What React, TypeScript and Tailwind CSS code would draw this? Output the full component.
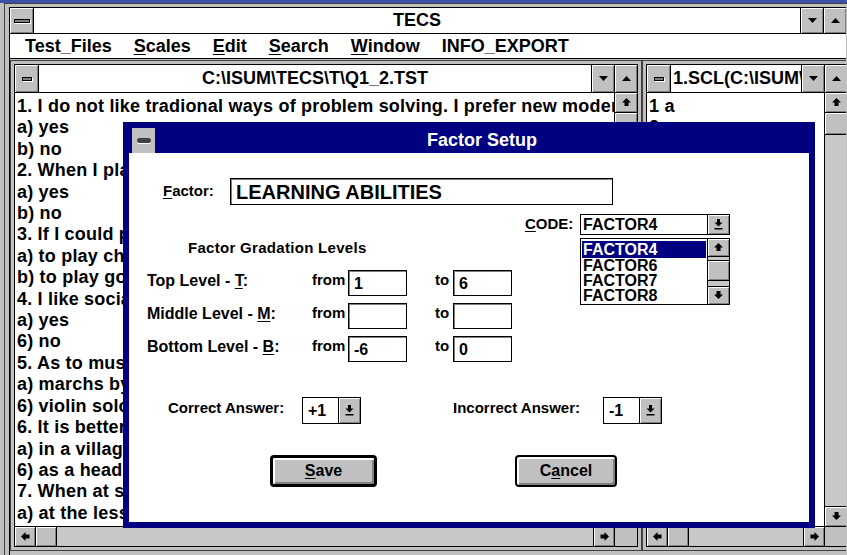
import React from "react";

type Dir = "up" | "down" | "left" | "right";

const bevel = "bg-[#c0c0c0] shadow-[inset_1px_1px_0_#fff,inset_-1px_-1px_0_#808080]";

const arrowPaths: Record<Dir, string> = {
  up: "M4.5 0L9 4.5H6.5V8h-4V4.5H0z",
  down: "M4.5 8L9 3.5H6.5V0h-4v3.5H0z",
  left: "M0 4.5L4.5 0v2.5H8.5v4H4.5V9z",
  right: "M9 4.5L4.5 0v2.5H0.5v4h4V9z",
};

const ScrollArrow = ({ dir }: { dir: Dir }) => (
  <svg width="9" height="9" viewBox="0 0 9 9">
    <path d={arrowPaths[dir]} fill="#000" />
  </svg>
);

const Tri = ({ up }: { up?: boolean }) => (
  <svg width="9" height="5" viewBox="0 0 9 5">
    <path d={up ? "M0 5h9L4.5 0z" : "M0 0h9L4.5 5z"} fill="#000" />
  </svg>
);

// combo box button: down arrow sitting on a bar
const ComboArrow = () => (
  <svg width="9" height="11" viewBox="0 0 9 11">
    <path d="M3 0h3v3.5h2.5L4.5 7.5 0.5 3.5H3z M0.5 9h8v1.5h-8z" fill="#000" />
  </svg>
);

const SysBox = ({ wide }: { wide?: boolean }) => (
  <div className={`flex w-[24px] shrink-0 items-center justify-center border-r border-black ${bevel}`}>
    <div
      className={
        wide
          ? "h-[4px] w-[16px] border border-black bg-[#808080] shadow-[1px_1px_0_#fff]"
          : "h-[4px] w-[10px] border border-black bg-[#808080] shadow-[1px_1px_0_#fff]"
      }
    />
  </div>
);

const TitleButtons = () => (
  <>
    <div className={`flex w-[23px] shrink-0 items-center justify-center border-l border-black ${bevel}`}>
      <Tri />
    </div>
    <div className={`flex w-[23px] shrink-0 items-center justify-center border-l border-black ${bevel}`}>
      <Tri up />
    </div>
  </>
);

const VScroll = ({ thumb }: { thumb: string }) => (
  <div className="flex w-[23px] shrink-0 flex-col border-l border-black bg-[#c8c8c8]">
    <div className={`flex h-[20px] items-center justify-center border-b border-black ${bevel}`}>
      <ScrollArrow dir="up" />
    </div>
    <div className={`${thumb} border-b border-black ${bevel}`} />
    <div className="flex-1" />
    <div className={`flex h-[20px] items-center justify-center border-t border-black ${bevel}`}>
      <ScrollArrow dir="down" />
    </div>
  </div>
);

const HScroll = () => (
  <div className="flex h-[20px] shrink-0 border-t border-black bg-[#c8c8c8]">
    <div className={`flex w-[21px] items-center justify-center border-r border-black ${bevel}`}>
      <ScrollArrow dir="left" />
    </div>
    <div className={`w-[21px] border-r border-black ${bevel}`} />
    <div className="flex-1" />
    <div className={`flex w-[21px] items-center justify-center border-l border-black ${bevel}`}>
      <ScrollArrow dir="right" />
    </div>
    <div className="w-[23px] border-l border-black bg-[#c0c0c0]" />
  </div>
);

const questions = [
  "1. I do not like tradional ways of problem solving. I prefer new modern methods.",
  "a) yes",
  "b) no",
  "2. When I play chess I like to attack",
  "a) yes",
  "b) no",
  "3. If I could please myself I would prefer",
  "a) to play chess",
  "b) to play golf",
  "4. I like social activities",
  "a) yes",
  "6) no",
  "5. As to music I prefer",
  "a) marchs by brass band",
  "6) violin solo",
  "6. It is better to live",
  "a) in a village",
  "6) as a head of the family",
  "7. When at school I was best",
  "a) at the lessons of math",
];

const scale = ["1 a", "2 a", "3 b", "4 a", "5 b", "6 a", "7 b", "8 a", "9 b", "10 a"];

const DocWindow = ({
  width,
  title,
  center,
  lines,
  thumb,
}: {
  width: string;
  title: string;
  center?: boolean;
  lines: string[];
  thumb: string;
}) => (
  <div className={`${width} h-[491px] shrink-0 border border-[#404040] bg-[#c0c0c0] p-[3px]`}>
    <div className="flex h-full flex-col border border-black bg-white">
      <div className="flex h-[28px] shrink-0 border-b border-black">
        <SysBox />
        <div
          className={`flex flex-1 items-center overflow-hidden whitespace-nowrap text-[18px] ${
            center ? "justify-center" : "justify-start pl-[2px]"
          }`}
        >
          {title}
        </div>
        <TitleButtons />
      </div>
      <div className="flex min-h-0 flex-1">
        <div className="flex-1 overflow-hidden whitespace-nowrap pl-[2px] pt-[3px] text-[18px] leading-[21.4px] tracking-[0.2px]">
          {lines.map((l, i) => (
            <div key={i}>{l}</div>
          ))}
        </div>
        <VScroll thumb={thumb} />
      </div>
      <HScroll />
    </div>
  </div>
);

const Field = ({ value }: { value: string }) => (
  <div className="h-[26px] w-[59px] border border-black bg-white pl-[5px] pt-[3px] text-[16px] leading-[20px] shadow-[inset_1px_1px_0_#808080]">
    {value}
  </div>
);

const LevelRow = ({
  label,
  mnemonic,
  from,
  to,
}: {
  label: string;
  mnemonic: string;
  from: string;
  to: string;
}) => (
  <div className="flex h-[26px] items-center">
    <div className="w-[165px] pb-[4px] text-[16px]">
      {label}
      <u className="underline-offset-2">{mnemonic}</u>:
    </div>
    <div className="w-[36px] pb-[4px]">from</div>
    <Field value={from} />
    <div className="w-[28px]" />
    <div className="w-[18px] pb-[4px]">to</div>
    <Field value={to} />
  </div>
);

const AnswerCombo = ({ value }: { value: string }) => (
  <div className="flex h-[27px] w-[59px] border border-black bg-white">
    <div className="flex-1 pl-[5px] pt-[3px] text-[16px] leading-[20px]">{value}</div>
    <div className={`flex w-[22px] items-center justify-center border-l border-black ${bevel}`}>
      <ComboArrow />
    </div>
  </div>
);

const codes = ["FACTOR4", "FACTOR6", "FACTOR7", "FACTOR8"];

const FactorSetup = () => (
  <div className="absolute left-[123px] top-[122px] flex h-[406px] w-[692px] flex-col border-[6px] border-[#000080] bg-white">
    <div className="flex h-[25px] shrink-0 bg-[#000080]">
      <div className="ml-[3px] flex w-[23px] items-center justify-center bg-[#c0c0c0]">
        <div className="h-[5px] w-[14px] rounded-full bg-[#404040] shadow-[0_1px_0_#fff]" />
      </div>
      <div className="flex flex-1 items-center justify-center text-[18px] text-white">Factor Setup</div>
    </div>

    <div className="flex flex-1 flex-col text-[15px]">
      <div className="mt-[25px] flex items-center pl-[34px]">
        <div className="w-[67px]">
          <u className="underline-offset-2">F</u>actor:
        </div>
        <div className="flex h-[27px] w-[383px] items-center border border-black pl-[5px] text-[20px] shadow-[inset_1px_1px_0_#808080]">
          LEARNING ABILITIES
        </div>
      </div>

      <div className="mt-[8px] flex items-center pl-[396px]">
        <div className="w-[55px]">
          <u className="underline-offset-2">C</u>ODE:
        </div>
        <div className="relative flex h-[21px] w-[150px] border border-black bg-white">
          <div className="flex-1 pl-[2px] text-[16px] leading-[19px]">FACTOR4</div>
          <div className={`flex w-[22px] items-center justify-center border-l border-black ${bevel}`}>
            <ComboArrow />
          </div>
          <div className="absolute left-[-1px] top-[23px] flex h-[67px] w-[150px] border border-black bg-white">
            <div className="flex-1 px-[1px] pt-[2px] text-[16px] leading-[15px]">
              {codes.map((c, i) =>
                i === 0 ? (
                  <div key={c} className="flex h-[17px] items-center bg-[#000080] pl-[1px] text-white">
                    {c}
                  </div>
                ) : (
                  <div key={c} className="pl-[1px]">
                    {c}
                  </div>
                )
              )}
            </div>
            <div className="flex w-[22px] flex-col border-l border-black bg-[#c8c8c8]">
              <div className={`flex h-[18px] items-center justify-center border-b border-black ${bevel}`}>
                <ScrollArrow dir="up" />
              </div>
              <div className={`mt-[3px] h-[21px] border-y border-black ${bevel}`} />
              <div className="flex-1" />
              <div className={`flex h-[18px] items-center justify-center border-t border-black ${bevel}`}>
                <ScrollArrow dir="down" />
              </div>
            </div>
          </div>
        </div>
      </div>

      <div className="mt-[3px] pl-[59px] leading-[17px] tracking-[0.3px]">Factor Gradation Levels</div>

      <div className="mt-[14px] flex flex-col gap-[7px] pl-[18px]">
        <LevelRow label="Top Level - " mnemonic="T" from="1" to="6" />
        <LevelRow label="Middle Level - " mnemonic="M" from="" to="" />
        <LevelRow label="Bottom Level - " mnemonic="B" from="-6" to="0" />
      </div>

      <div className="mt-[35px] flex h-[27px] items-center pl-[39px]">
        <div className="w-[134px] pb-[4px]">Correct Answer:</div>
        <AnswerCombo value="+1" />
        <div className="w-[92px]" />
        <div className="w-[150px] pb-[4px]">Incorrect Answer:</div>
        <AnswerCombo value="-1" />
      </div>

      <div className="mt-[31px] flex pl-[141px] text-[16px]">
        <div className="flex h-[32px] w-[107px] items-center justify-center rounded-[4px] border-[3px] border-black bg-[#c0c0c0] shadow-[inset_2px_2px_0_#fff,inset_-2px_-2px_0_#808080]">
          <span>
            <u className="underline-offset-2">S</u>ave
          </span>
        </div>
        <div className="w-[138px]" />
        <div className="flex h-[32px] w-[102px] items-center justify-center rounded-[4px] border-2 border-black bg-[#c0c0c0] shadow-[inset_2px_2px_0_#fff,inset_-2px_-2px_0_#808080]">
          <span>
            C<u className="underline-offset-2">a</u>ncel
          </span>
        </div>
      </div>
    </div>
  </div>
);

export default function App() {
  return (
    <div className="relative h-[555px] w-[847px] overflow-hidden bg-[#c0c0c0] font-['Liberation_Sans',Arial,sans-serif] font-bold text-black select-none">
      <div className="h-[3px] bg-[#3c4fa8]" />
      <div className="ml-[4px] h-[552px] border-l border-t border-[#404040] pl-[4px] pt-[3px]">
        <div className="flex h-full w-[837px] flex-col border-l border-t border-black">
          {/* application caption */}
          <div className="flex h-[26px] shrink-0 border-b border-black bg-white">
            <SysBox wide />
            <div className="flex flex-1 items-center justify-center text-[18px]">TECS</div>
            <TitleButtons />
          </div>
          {/* menu bar */}
          <div className="flex h-[25px] shrink-0 items-center gap-[22px] border-b border-black bg-white pl-[15px] text-[18px]">
            <span>Test_Files</span>
            <span>
              <u className="underline-offset-2">S</u>cales
            </span>
            <span>
              <u className="underline-offset-2">E</u>dit
            </span>
            <span>
              <u className="underline-offset-2">S</u>earch
            </span>
            <span>
              <u className="underline-offset-2">W</u>indow
            </span>
            <span>INFO_EXPORT</span>
          </div>
          {/* MDI client area */}
          <div className="flex flex-1 overflow-hidden bg-[#c0c0c0] pt-px">
            <DocWindow width="w-[632px]" title="C:\ISUM\TECS\T\Q1_2.TST" center lines={questions} thumb="h-[20px]" />
            <DocWindow width="w-[210px]" title="1.SCL(C:\ISUM\TECS\T\Q1_2.SCL)" lines={scale} thumb="h-[22px]" />
          </div>
        </div>
      </div>
      <FactorSetup />
    </div>
  );
}
